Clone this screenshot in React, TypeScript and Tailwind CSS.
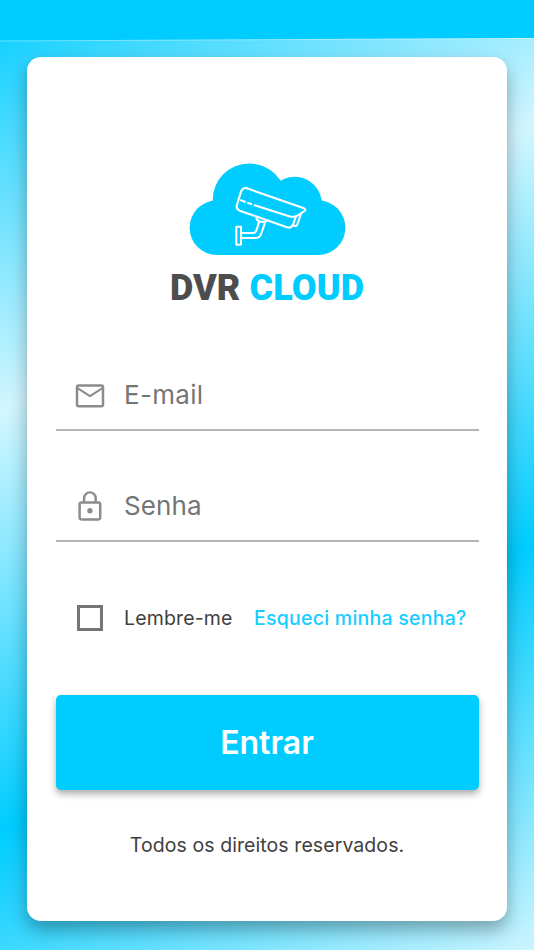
import React, { useState } from "react";

function CloudLogo() {
  return (
    <svg viewBox="189 163 157 93" className="w-[157px] h-[93px]" fill="none">
      <g fill="#00ccff">
        <circle cx="217" cy="227.7" r="27.4" />
        <circle cx="318" cy="227.7" r="27.4" />
        <circle cx="249.3" cy="200" r="36.6" />
        <circle cx="294.7" cy="204" r="27.2" />
        <path d="M217 201H318V255.1H217Z" />
      </g>
      <g transform="translate(225 175) scale(0.3333)" stroke="#fff" strokeWidth="6.2" strokeLinecap="round" strokeLinejoin="round">
        <path d="M66 40L237 100Q245 104 237 109L219 121Q209 127 197 125L89 91" />
        <path d="M66 40Q53 36 48 50L36 89Q32 102 44 107L186 157Q199 161 204 149L212 127" />
        <path d="M47 76L60 80M69 84L79 87" />
        <path d="M227 119L217 149Q215 154 210 153L203 150" />
        <path d="M94 127Q95 138 108 140Q120 142 125 137" />
        <path d="M102 142L94 167Q91 174 84 174H50M120 143L109 175Q105 189 93 189H50" />
        <rect x="34" y="155" width="14" height="54" rx="1" />
      </g>
    </svg>
  );
}

function MailIcon() {
  return (
    <svg viewBox="0 0 34 34" className="size-[34px]" fill="none" stroke="#8c8c8c" strokeLinejoin="round">
      <rect x="4" y="7.6" width="26" height="20.6" rx="1.6" strokeWidth="2.5" />
      <path d="M4.5 10.2L17 18.2L29.5 10.2" strokeWidth="2.1" />
    </svg>
  );
}

function LockIcon() {
  return (
    <svg viewBox="0 0 34 34" className="size-[34px]" fill="none" stroke="#8c8c8c">
      <rect x="6.6" y="13.4" width="20.6" height="17" rx="1.8" strokeWidth="2.5" />
      <path d="M11.1 13V9.2a5.8 5.8 0 0 1 11.6 0V13" strokeWidth="2.4" />
      <circle cx="16.9" cy="21.8" r="2.7" fill="#8c8c8c" stroke="none" />
    </svg>
  );
}

export default function App() {
  const [email, setEmail] = useState("");
  const [password, setPassword] = useState("");
  const [remember, setRemember] = useState(false);

  return (
    <div className="w-[534px] h-[950px] overflow-hidden font-['Inter',sans-serif] bg-[linear-gradient(151.6deg,#00ccff_-7px,#d2f6ff_363px,#00ccff_732px,#d2f6ff_1102px)]">
      <div className="h-[42px] bg-white/35 [clip-path:polygon(0_0,100%_0,100%_39px,0_41.5px)]">
        <div className="h-[41px] bg-[#00ccff] [clip-path:polygon(0_0,100%_0,100%_38px,0_40.5px)]" />
      </div>

      <main className="mt-[15px] mx-auto w-[480px] h-[864px] rounded-[14px] bg-white px-[28.5px] flex flex-col shadow-[0_9px_18px_rgba(0,0,0,0.32)]">
        <div className="pt-[106px] flex flex-col items-center">
          <CloudLogo />
          <h1 className="mt-[11px] h-[42px] leading-[42px] font-['Roboto',sans-serif] font-black text-[36px] tracking-[0.1px] text-[#4d4d4d] whitespace-nowrap">
            DVR <span className="text-[#00ccff]">CLOUD</span>
          </h1>
        </div>

        <form onSubmit={(e) => e.preventDefault()} className="mt-[51px] flex flex-col">
          <label className="h-[71px] border-b-2 border-[#b5b5b5] flex items-center pl-[17px]">
            <MailIcon />
            <input
              type="email"
              value={email}
              onChange={(e) => setEmail(e.target.value)}
              placeholder="E-mail"
              className="ml-[17.5px] w-[320px] text-[26px] tracking-[0.3px] outline-none placeholder:text-[#757575]"
            />
          </label>
          <label className="mt-[40px] h-[71px] border-b-2 border-[#b5b5b5] flex items-center pl-[17px]">
            <LockIcon />
            <input
              type="password"
              value={password}
              onChange={(e) => setPassword(e.target.value)}
              placeholder="Senha"
              className="ml-[17.5px] w-[320px] text-[26px] tracking-[0.1px] outline-none placeholder:text-[#757575]"
            />
          </label>

          <div className="mt-[62px] h-[28px] pl-[21px] flex items-center">
            <input
              type="checkbox"
              checked={remember}
              onChange={(e) => setRemember(e.target.checked)}
              className="appearance-none size-[26px] border-3 border-[#757575] checked:bg-[#00ccff]"
            />
            <span className="pt-px ml-[21.5px] w-[130px] text-[19.5px] tracking-[0.15px] text-[#404040]">Lembre-me</span>
            <a href="#" className="pt-px text-[19.5px] font-medium tracking-[0.25px] text-[#17cdff] whitespace-nowrap">Esqueci minha senha?</a>
          </div>

          <button type="submit" className="mt-[63px] h-[95px] rounded-[5px] bg-[#00ccff] text-white text-[32px] font-semibold shadow-[0_4px_7px_rgba(0,0,0,0.33)]">
            Entrar
          </button>
        </form>

        <p className="mt-[40px] text-center text-[19.5px] leading-[30px] tracking-[0.08px] text-[#404040]">Todos os direitos reservados.</p>
      </main>
    </div>
  );
}
